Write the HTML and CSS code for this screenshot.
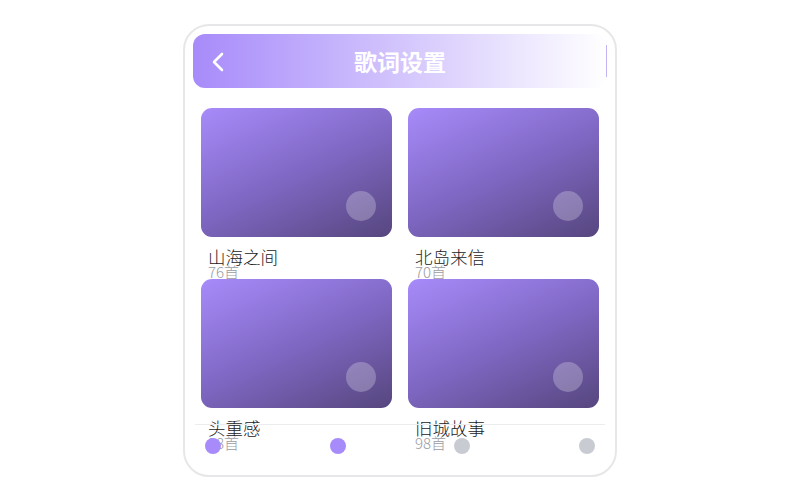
FILE: index.html
```html
<!DOCTYPE html>
<html lang="zh">
<head>
<meta charset="utf-8">
<title>歌词设置</title>
<link rel="stylesheet" href="styles.css">
</head>
<body>
<div class="phone">
  <div class="header">
    <svg class="back" width="14" height="20" viewBox="0 0 14 20"><polyline points="11,2 3,10 11,18" fill="none" stroke="#fff" stroke-width="2.6" stroke-linecap="round" stroke-linejoin="round"/></svg>
    <div class="title">歌词设置</div>
  </div>
  <div class="grid">
    <div class="item">
      <div class="cover"><span class="dot"></span></div>
      <div class="info"><div class="name">山海之间</div><div class="count">76首</div></div>
    </div>
    <div class="item">
      <div class="cover"><span class="dot"></span></div>
      <div class="info"><div class="name">北岛来信</div><div class="count">70首</div></div>
    </div>
    <div class="item">
      <div class="cover"><span class="dot"></span></div>
      <div class="info"><div class="name">头重感</div><div class="count">98首</div></div>
    </div>
    <div class="item">
      <div class="cover"><span class="dot"></span></div>
      <div class="info"><div class="name">旧城故事</div><div class="count">98首</div></div>
    </div>
  </div>
  <div class="tabbar">
    <span class="tab active"></span>
    <span class="tab active"></span>
    <span class="tab"></span>
    <span class="tab"></span>
  </div>
</div>
</body>
</html>
```
FILE: styles.css
```css
html, body {
  margin: 0;
  padding: 0;
  background: #fff;
}
body {
  font-family: "Noto Sans CJK SC", "Noto Sans", sans-serif;
  padding-top: 24px;
}
.phone {
  position: relative;
  box-sizing: border-box;
  width: 434px;
  height: 453px;
  margin: 0 auto;
  border: 2px solid #e7e7ea;
  border-radius: 26px;
  padding: 8px;
  overflow: hidden;
  background: #fff;
}
.header {
  position: relative;
  height: 54px;
  border-radius: 12px;
  background: linear-gradient(90deg, #a78bfa 0%, #ffffff 100%);
  display: flex;
  align-items: center;
  justify-content: center;
}
.header::after {
  content: "";
  position: absolute;
  right: 0;
  top: 11px;
  bottom: 11px;
  width: 1px;
  background: #c2b4f4;
}
.back {
  position: absolute;
  left: 18px;
  top: 18px;
}
.title {
  color: #fff;
  font-size: 23px;
  font-weight: 700;
  line-height: 30px;
}
.grid {
  margin: 20px 8px 0;
  display: grid;
  grid-template-columns: 1fr 1fr;
  column-gap: 16px;
}
.cover {
  position: relative;
  height: 129px;
  border-radius: 11px;
  background: linear-gradient(155deg, #a78bfa 0%, #7f68c4 50%, #56467e 100%);
}
.dot {
  position: absolute;
  right: 16px;
  bottom: 16px;
  width: 30px;
  height: 30px;
  border-radius: 50%;
  background: rgba(255, 255, 255, 0.25);
}
.info {
  padding: 11px 7px 0;
  height: 31px;
}
.name {
  font-size: 17.5px;
  font-weight: 300;
  line-height: 18px;
  color: #222;
}
.count {
  margin-top: -2px;
  font-size: 15px;
  font-weight: 300;
  line-height: 16px;
  color: #9a9ca3;
}
.tabbar {
  position: absolute;
  left: 10px;
  right: 10px;
  top: 398px;
  border-top: 1px solid #ececef;
  padding: 13px 10px 0;
  display: flex;
  justify-content: space-between;
}
.tab {
  width: 16px;
  height: 16px;
  border-radius: 50%;
  background: #c8ccd2;
}
.tab.active {
  background: #a78bfa;
}
```
